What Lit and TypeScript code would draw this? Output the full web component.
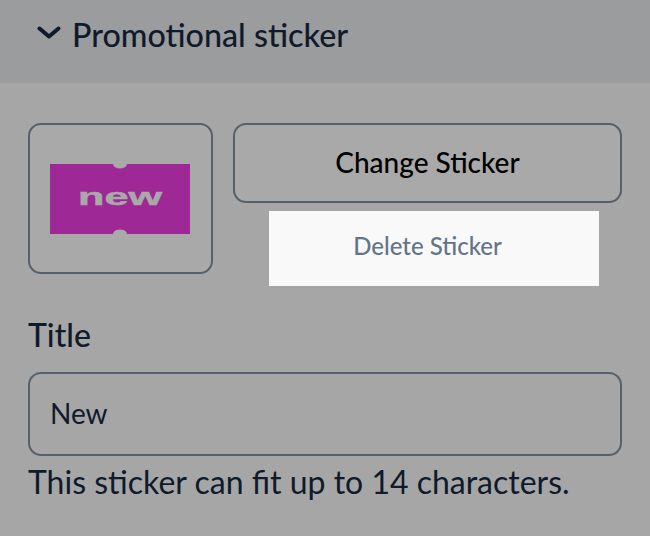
import { LitElement, html, css } from "lit";
import { customElement } from "lit/decorators.js";

@customElement("app-root")
export class AppRoot extends LitElement {
  static styles = css`
    :host { display: block; width: 650px; height: 536px; overflow: hidden; background: #a6a6a6; font-family: Lato, "Liberation Sans", sans-serif; color: #0f1a2a; font-variant-ligatures: common-ligatures; }
    .head { height: 83px; box-sizing: border-box; background: #9b9c9e; display: flex; align-items: center; gap: 11px; padding: 0 0 14px 37px; font-size: 32.25px; font-weight: 500; }
    .head svg { width: 24px; height: 14px; flex: none; margin-top: -4px; }
    .body { padding: 40px 28px 0; display: flex; flex-direction: column; }
    .top { display: flex; gap: 20px; }
    .thumb { width: 185px; height: 151px; box-sizing: border-box; border: 2px solid #56606b; border-radius: 13px; display: flex; align-items: center; justify-content: center; background: #a9a9a9; }
    .thumb svg { width: 140px; height: 70px; display: block; margin: 1px 2px 0 0; }
    .actions { flex: 1; display: flex; flex-direction: column; align-items: center; gap: 8px; }
    .change { width: 100%; height: 80px; box-sizing: border-box; border: 2px solid #56606b; border-radius: 13px; background: #a9a9a9; display: flex; align-items: center; justify-content: center; padding-bottom: 2px; font-size: 28px; font-weight: 500; color: #000; }
    .delete { width: 330px; height: 75px; margin-left: 12px; box-sizing: border-box; padding: 0 12px 6px 0; background: #f9f9f9; display: flex; align-items: center; justify-content: center; font-size: 24px; font-weight: 500; color: #64748b; }
    .label { margin-top: 29px; font-size: 32px; font-weight: 500; line-height: 40px; }
    .input { margin-top: 17px; height: 84px; box-sizing: border-box; border: 2px solid #56606b; border-radius: 13px; display: flex; align-items: center; padding: 0 0 2px 20px; font-size: 28px; }
    .hint { margin-top: 6px; font-size: 32px; line-height: 40px; }
  `;
  render() {
    return html`
      <div class="head">
        <svg viewBox="0 0 24 14"><path d="M2.5 2.5 12 10.5 21.5 2.5" fill="none" stroke="#0f1a2a" stroke-width="4" stroke-linecap="round" stroke-linejoin="round"/></svg>
        <span>Promotional sticker</span>
      </div>
      <div class="body">
        <div class="top">
          <div class="thumb">
            <svg viewBox="0 0 140 70">
              <path d="M0 0H63A7 4.5 0 0 0 77 0H140V70H77A7 4.5 0 0 0 63 70H0Z" fill="#9d2896"/>
              <text x="70" y="41" text-anchor="middle" font-family="Liberation Sans" font-weight="700" font-size="24" fill="#a9a9a9" stroke="#a9a9a9" stroke-width="0.5" textLength="84" lengthAdjust="spacingAndGlyphs">new</text>
            </svg>
          </div>
          <div class="actions">
            <div class="change">Change Sticker</div>
            <div class="delete">Delete Sticker</div>
          </div>
        </div>
        <div class="label">Title</div>
        <div class="input">New</div>
        <div class="hint">This sticker can fit up to 14 characters.</div>
      </div>
    `;
  }
}
